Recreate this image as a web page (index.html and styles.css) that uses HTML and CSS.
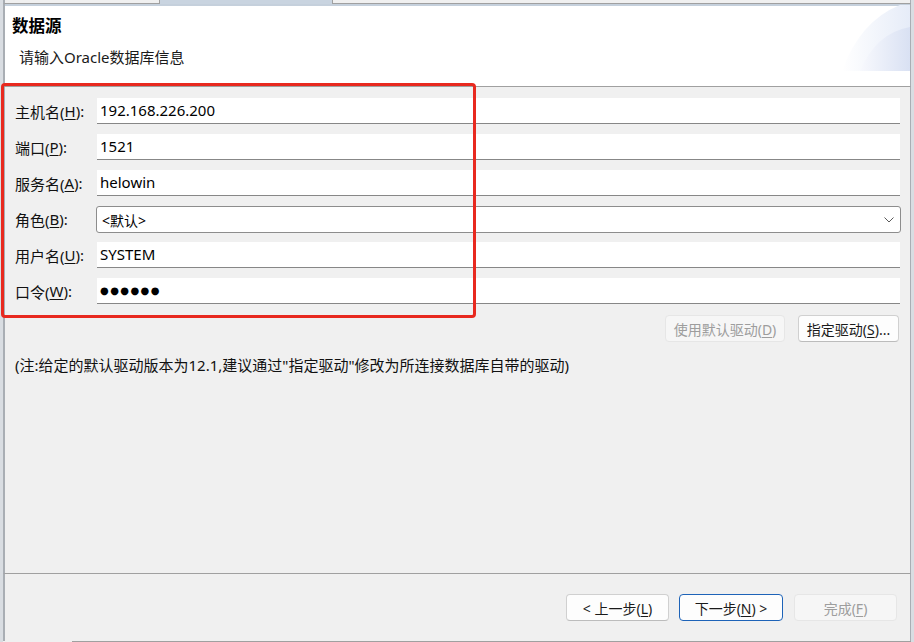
FILE: index.html
```html
<!DOCTYPE html>
<html lang="zh-CN">
<head>
<meta charset="utf-8">
<title>数据源</title>
<link rel="stylesheet" href="styles.css">
</head>
<body>
<div class="window">
  <div class="tabs"><div class="tab"></div></div>
  <div class="tabline"></div>
  <div class="header">
    <div class="header-text">
      <div class="title">数据源</div>
      <div class="subtitle">请输入Oracle数据库信息</div>
    </div>
    <svg class="banner" width="72" height="66" viewBox="0 0 72 66">
      <defs>
        <linearGradient id="g1" x1="0" y1="0" x2="1" y2="0">
          <stop offset="0" stop-color="#ffffff"/>
          <stop offset="1" stop-color="#e6ecf8"/>
        </linearGradient>
        <linearGradient id="g2" x1="0" y1="0" x2="1" y2="0">
          <stop offset="0" stop-color="#f8f9fd"/>
          <stop offset="1" stop-color="#d9e1f3"/>
        </linearGradient>
      </defs>
      <path d="M72 0 L62 0 Q22 16 4 66 L72 66 Z" fill="url(#g1)"/>
      <path d="M72 22 Q38 28 22 66 L72 66 Z" fill="url(#g2)"/>
    </svg>
  </div>
  <div class="main">
    <div class="form">
      <label class="lbl">主机名(<u>H</u>):</label>
      <div class="field">192.168.226.200</div>
      <label class="lbl">端口(<u>P</u>):</label>
      <div class="field">1521</div>
      <label class="lbl">服务名(<u>A</u>):</label>
      <div class="field">helowin</div>
      <label class="lbl">角色(<u>B</u>):</label>
      <div class="combo"><span>&lt;默认&gt;</span>
        <svg class="chev" width="10" height="6" viewBox="0 0 10 6"><polyline points="0.5,0.5 5,5 9.5,0.5" fill="none" stroke="#5a5a5a" stroke-width="1"/></svg>
      </div>
      <label class="lbl">用户名(<u>U</u>):</label>
      <div class="field">SYSTEM</div>
      <label class="lbl">口令(<u>W</u>):</label>
      <div class="field dots">●●●●●●</div>
    </div>
    <div class="driver-row">
      <button class="btn disabled driver-default">使用默认驱动(<u>D</u>)</button>
      <button class="btn driver-pick">指定驱动(<u>S</u>)...</button>
    </div>
    <div class="note">(注:给定的默认驱动版本为12.1,建议通过"指定驱动"修改为所连接数据库自带的驱动)</div>
    <div class="highlight"></div>
  </div>
  <div class="footer">
    <button class="btn nav">&lt; 上一步(<u>L</u>)</button>
    <button class="btn nav primary">下一步(<u>N</u>) &gt;</button>
    <button class="btn nav disabled">完成(<u>F</u>)</button>
  </div>
  <div class="bottomline"></div>
</div>
</body>
</html>
```
FILE: styles.css
```css
html, body {
  margin: 0;
  padding: 0;
}
body {
  width: 914px;
  height: 642px;
  overflow: hidden;
  background: #f0f0f0;
  font-family: "Noto Sans", "Noto Sans CJK SC", sans-serif;
  font-size: 15px;
  color: #000;
}
.window {
  height: 642px;
  box-sizing: border-box;
  display: flex;
  flex-direction: column;
  border-left: 3px solid #d9dde2;
  border-right: 3px solid #d9dde2;
  position: relative;
}
.tabs {
  height: 3px;
  background: #f0f0f0;
  border-bottom: 1px solid #a0a0a0;
  display: flex;
  padding-left: 154px;
  border-left: 2px solid #a9aeb4;
  border-right: 1px solid #a9aeb4;
}
.tab {
  width: 172px;
  height: 4px;
  background: #c9d4e0;
  border-left: 1px solid #a0a0a0;
  border-right: 1px solid #a0a0a0;
}
.tabline {
  height: 2px;
  background: #c5d0dc;
  border-left: 2px solid #a9aeb4;
  border-right: 1px solid #a9aeb4;
}
.header {
  height: 80px;
  background: #fff;
  border-bottom: 1px solid #a0a0a0;
  border-left: 2px solid #a9aeb4;
  border-right: 1px solid #a9aeb4;
  display: flex;
  justify-content: space-between;
}
.header-text {
  padding-left: 7px;
}
.title {
  margin-top: 10px;
  font-size: 16.5px;
  line-height: 20px;
  font-weight: bold;
}
.subtitle {
  margin-top: 11px;
  padding-left: 7px;
  font-size: 15px;
  line-height: 20px;
  color: #1a1a1a;
}
.banner {
  display: block;
  margin-top: -1px;
}
.main {
  flex: 1;
  display: flex;
  flex-direction: column;
  padding: 11px 10px 0 10px;
  border-left: 2px solid #a9aeb4;
  border-right: 1px solid #a9aeb4;
  border-bottom: 1px solid #a0a0a0;
  position: relative;
}
.form {
  display: grid;
  grid-template-columns: 82px 1fr;
  grid-auto-rows: 26px;
  row-gap: 10px;
}
.lbl {
  display: flex;
  align-items: center;
  font-size: 15px;
  color: #111;
}
.lbl u, .btn u {
  text-underline-offset: 2px;
}
.field {
  background: #fff;
  border-bottom: 1px solid #878787;
  box-sizing: border-box;
  height: 26px;
  line-height: 25px;
  padding-left: 3px;
  font-size: 15px;
}
.dots {
  font-family: "DejaVu Sans", sans-serif;
  font-size: 10px;
  letter-spacing: 1.4px;
  line-height: 26px;
}
.combo {
  background: #fff;
  border: 1px solid #8d8d8d;
  border-radius: 3px;
  height: 27px;
  box-sizing: border-box;
  margin: 0 -1px 0 -1px;
  display: flex;
  align-items: center;
  justify-content: space-between;
  padding: 0 6px 0 5px;
  font-size: 14px;
}
.chev {
  display: block;
}
.driver-row {
  display: flex;
  justify-content: flex-end;
  gap: 13px;
  margin-top: 11px;
  padding-right: 1px;
}
.btn {
  font-family: "Noto Sans", "Noto Sans CJK SC", sans-serif;
  font-size: 14px;
  height: 27px;
  box-sizing: border-box;
  background: #fdfdfd;
  border: 1px solid #d0d0d0;
  border-bottom-color: #bcbcbc;
  border-radius: 4px;
  padding: 0;
  color: #1a1a1a;
}
.btn.disabled {
  background: #f6f6f6;
  border-color: #e6e6e6;
  color: #9d9d9d;
}
.driver-default {
  width: 120px;
}
.driver-pick {
  width: 101px;
}
.note {
  margin-top: 13px;
  font-size: 15px;
  line-height: 20px;
  color: #111;
}
.highlight {
  position: absolute;
  left: -4px;
  top: -4px;
  width: 475px;
  height: 235px;
  box-sizing: border-box;
  border: 3.5px solid #e8291f;
  border-radius: 4px;
  pointer-events: none;
}
.footer {
  height: 67px;
  box-sizing: border-box;
  display: flex;
  justify-content: flex-end;
  align-items: flex-start;
  padding: 20px 13px 0 0;
  border-left: 2px solid #a9aeb4;
  border-right: 1px solid #a9aeb4;
}
.nav {
  width: 103px;
  margin-left: 10px;
}
.nav.primary {
  width: 104px;
  margin-left: 10px;
  border: 1px solid #1d63b8;
  margin-right: 1px;
}
.bottomline {
  height: 1px;
  background: #a0a0a0;
  margin-left: 69px;
}
```
